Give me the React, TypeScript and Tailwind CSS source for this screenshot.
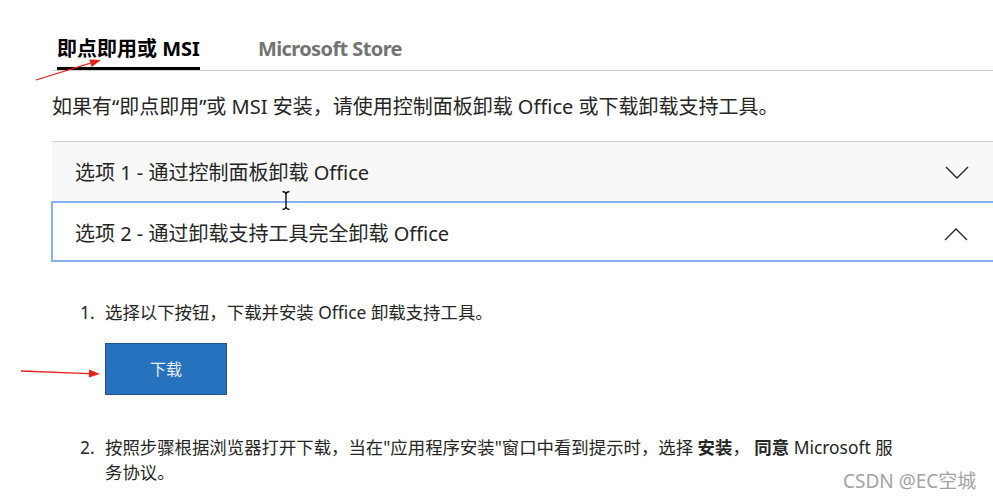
const font = { fontFamily: '"Noto Sans", "Noto Sans CJK SC", sans-serif' };

function RedArrow({ x1, y1, x2, y2 }: { x1: number; y1: number; y2: number; x2: number }) {
  const ang = Math.atan2(y2 - y1, x2 - x1);
  const len = 11;
  const w = 4;
  const bx = x2 - len * Math.cos(ang);
  const by = y2 - len * Math.sin(ang);
  const px = -Math.sin(ang) * w;
  const py = Math.cos(ang) * w;
  return (
    <g>
      <line x1={x1} y1={y1} x2={bx} y2={by} stroke="#e8231d" strokeWidth="1.3" />
      <polygon points={`${x2},${y2} ${bx + px},${by + py} ${bx - px},${by - py}`} fill="#e8231d" />
    </g>
  );
}

function Chevron({ up = false }: { up?: boolean }) {
  return (
    <svg width="24" height="14" viewBox="0 0 24 14" fill="none">
      <polyline
        points={up ? '1,13 12,2 23,13' : '1,1 12,12 23,1'}
        stroke="#262626"
        strokeWidth="1.4"
      />
    </svg>
  );
}

export default function App() {
  return (
    <div className="relative w-[993px] h-[499px] overflow-hidden bg-white text-[#262626]" style={font}>
      <div className="w-[1003px] pl-[52px] pt-[35px]">
        {/* Tabs */}
        <div className="flex items-end border-b border-[#d2d2d2]">
          <div className="ml-[5px] pb-[4px] border-b-[3px] border-black text-[20px] leading-[28px] font-bold text-black">
            即点即用或 MSI
          </div>
          <div className="ml-[58px] pb-[7px] text-[20px] leading-[28px] font-bold tracking-[-0.6px] text-[#737373]">
            Microsoft Store
          </div>
        </div>

        <p className="mt-[22px] text-[20px] leading-[28px]">
          如果有“即点即用”或 MSI 安装，请使用控制面板卸载 Office 或下载卸载支持工具。
        </p>

        {/* Accordion */}
        <div className="mt-[20px]">
          <div className="flex h-[60px] items-center justify-between border-t border-[#d2d2d2] bg-[#f8f8f8] pl-[23px] pr-[34px] pt-[3px]">
            <span className="text-[20px] leading-[28px]">选项 1 - 通过控制面板卸载 Office</span>
            <Chevron />
          </div>
          <div className="-ml-px flex h-[61px] items-center justify-between border-2 border-[#86b1f4] bg-white pl-[22px] pr-[33px] pt-[4px]">
            <span className="text-[20px] leading-[28px]">选项 2 - 通过卸载支持工具完全卸载 Office</span>
            <Chevron up />
          </div>
        </div>

        {/* Steps */}
        <ol className="mt-[38px] pl-[28px] text-[17.4px] leading-[25px]">
          <li className="flex">
            <span className="w-[25px] shrink-0">1.</span>
            <div>
              <p>选择以下按钮，下载并安装 Office 卸载支持工具。</p>
              <button className="mt-[18px] flex h-[52px] w-[122px] items-center justify-center border border-[#1c5290] bg-[#2672be] text-[16px] text-[#e6eef8]">
                下载
              </button>
            </div>
          </li>
          <li className="mt-[40px] flex">
            <span className="w-[25px] shrink-0">2.</span>
            <p className="w-[798px]">
              按照步骤根据浏览器打开下载，当在"应用程序安装"窗口中看到提示时，选择 <b>安装</b>， <b>同意</b> Microsoft 服务协议。
            </p>
          </li>
        </ol>
      </div>

      {/* Annotations */}
      <svg className="pointer-events-none absolute left-0 top-0" width="993" height="499">
        <RedArrow x1={36} y1={80} x2={101} y2={60} />
        <RedArrow x1={21} y1={371} x2={100} y2={374} />
        <g stroke="#111" strokeWidth="1.4" fill="none">
          <line x1="286" y1="192" x2="286" y2="209" />
          <path d="M282.5 191.5 Q286 192 286 194 Q286 192 289.5 191.5" />
          <path d="M282.5 209.5 Q286 209 286 207 Q286 209 289.5 209.5" />
        </g>
      </svg>

      <div className="absolute left-[843px] top-[468px] text-[19px] leading-[26px] text-[#a3a3a3]">CSDN @EC空城</div>
    </div>
  );
}
